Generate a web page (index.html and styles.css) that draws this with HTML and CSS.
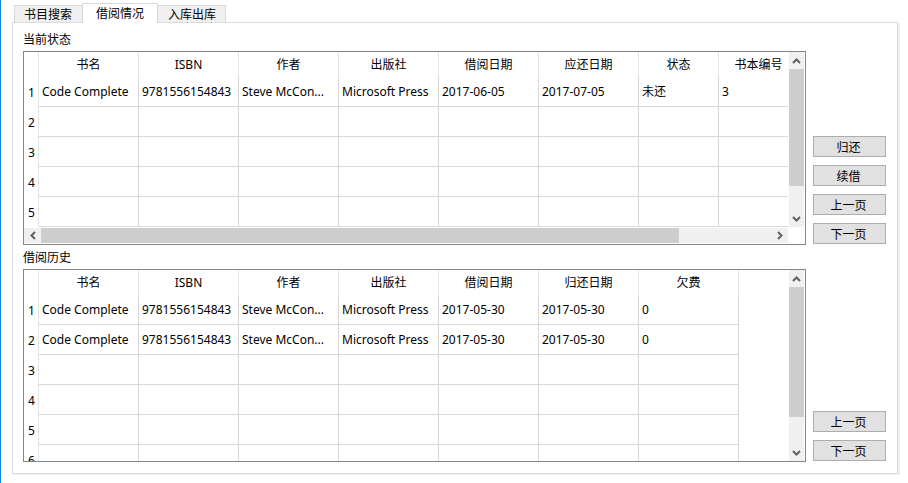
FILE: index.html
```
<!DOCTYPE html>
<html lang="zh-CN">
<head>
<meta charset="utf-8">
<title>借阅情况</title>
<link rel="stylesheet" href="styles.css">
</head>
<body>
<div class="tabs" role="tablist">
  <button class="tab" role="tab" aria-selected="false">书目搜索</button>
  <button class="tab tab-active" role="tab" aria-selected="true">借阅情况</button>
  <button class="tab" role="tab" aria-selected="false">入库出库</button>
</div>
<main class="panel">
  <h2 class="label" id="current">当前状态</h2>
  <section class="group">
    <div class="frame">
      <div class="viewport">
        <table class="grid" aria-labelledby="current">
          <colgroup><col class="col-index"><col class="col"><col class="col"><col class="col"><col class="col"><col class="col"><col class="col"><col class="col-narrow"><col class="col-narrow"></colgroup>
          <thead><tr><th></th><th>书名</th><th>ISBN</th><th>作者</th><th>出版社</th><th>借阅日期</th><th>应还日期</th><th>状态</th><th>书本编号</th></tr></thead>
          <tbody>
            <tr><th>1</th><td>Code Complete</td><td>9781556154843</td><td>Steve McCon...</td><td>Microsoft Press</td><td>2017-06-05</td><td>2017-07-05</td><td>未还</td><td>3</td></tr>
            <tr><th>2</th><td></td><td></td><td></td><td></td><td></td><td></td><td></td><td></td></tr>
            <tr><th>3</th><td></td><td></td><td></td><td></td><td></td><td></td><td></td><td></td></tr>
            <tr><th>4</th><td></td><td></td><td></td><td></td><td></td><td></td><td></td><td></td></tr>
            <tr><th>5</th><td></td><td></td><td></td><td></td><td></td><td></td><td></td><td></td></tr>
          </tbody>
        </table>
      </div>
      <div class="scroll scroll-v">
        <button class="arrow" aria-label="向上滚动"><svg width="9" height="6" viewBox="0 0 9 6"><path d="M1 5 4.500 1.500 8 5"/></svg></button>
        <div class="track"><div class="thumb thumb-current"></div></div>
        <button class="arrow" aria-label="向下滚动"><svg width="9" height="6" viewBox="0 0 9 6"><path d="M1 1 4.500 4.500 8 1"/></svg></button>
      </div>
      <div class="scroll scroll-h">
        <button class="arrow" aria-label="向左滚动"><svg width="6" height="9" viewBox="0 0 6 9"><path d="M5 1 1.500 4.500 5 8"/></svg></button>
        <div class="track"><div class="thumb thumb-across"></div></div>
        <button class="arrow" aria-label="向右滚动"><svg width="6" height="9" viewBox="0 0 6 9"><path d="M1 1 4.500 4.500 1 8"/></svg></button>
      </div>
    </div>
    <div class="actions">
      <button class="action">归还</button>
      <button class="action">续借</button>
      <button class="action">上一页</button>
      <button class="action">下一页</button>
    </div>
  </section>
  <h2 class="label" id="history">借阅历史</h2>
  <section class="group group-fill">
    <div class="frame frame-fill">
      <div class="viewport">
        <table class="grid" aria-labelledby="history">
          <colgroup><col class="col-index"><col class="col"><col class="col"><col class="col"><col class="col"><col class="col"><col class="col"><col class="col"></colgroup>
          <thead><tr><th></th><th>书名</th><th>ISBN</th><th>作者</th><th>出版社</th><th>借阅日期</th><th>归还日期</th><th>欠费</th></tr></thead>
          <tbody>
            <tr><th>1</th><td>Code Complete</td><td>9781556154843</td><td>Steve McCon...</td><td>Microsoft Press</td><td>2017-05-30</td><td>2017-05-30</td><td>0</td></tr>
            <tr><th>2</th><td>Code Complete</td><td>9781556154843</td><td>Steve McCon...</td><td>Microsoft Press</td><td>2017-05-30</td><td>2017-05-30</td><td>0</td></tr>
            <tr><th>3</th><td></td><td></td><td></td><td></td><td></td><td></td><td></td></tr>
            <tr><th>4</th><td></td><td></td><td></td><td></td><td></td><td></td><td></td></tr>
            <tr><th>5</th><td></td><td></td><td></td><td></td><td></td><td></td><td></td></tr>
            <tr><th>6</th><td></td><td></td><td></td><td></td><td></td><td></td><td></td></tr>
          </tbody>
        </table>
      </div>
      <div class="scroll scroll-v">
        <button class="arrow" aria-label="向上滚动"><svg width="9" height="6" viewBox="0 0 9 6"><path d="M1 5 4.500 1.500 8 5"/></svg></button>
        <div class="track"><div class="thumb thumb-history"></div></div>
        <button class="arrow" aria-label="向下滚动"><svg width="9" height="6" viewBox="0 0 9 6"><path d="M1 1 4.500 4.500 8 1"/></svg></button>
      </div>
    </div>
    <div class="actions">
      <button class="action">上一页</button>
      <button class="action">下一页</button>
    </div>
  </section>
</main>
</body>
</html>
```
FILE: styles.css
```
* {
  box-sizing: border-box;
}

body {
  display: flex;
  flex-direction: column;
  height: 100vh;
  margin: 0;
  padding: 3px 10px 9px 11px;
  border-left: 1px solid #1883d7;
  background: #fff;
  color: #000;
  font: 12px/16px "Noto Sans", "Noto Sans CJK SC", sans-serif;
}

button {
  margin: 0;
  padding: 0;
  border: 0;
  color: inherit;
  font: inherit;
}

.tabs {
  display: flex;
  align-items: flex-end;
  padding-left: 2px;
}

.tab {
  height: 17px;
  padding: 1px 9px 0;
  border: 1px solid #d9d9d9;
  border-bottom: 0;
  background: #f0f0f0;
}

.tab:first-child {
  border-right: 0;
  padding-right: 10px;
}

.tab:last-child {
  border-left: 0;
  padding-left: 10px;
}

.tab-active {
  z-index: 1;
  height: 20px;
  margin-bottom: -1px;
  padding: 0 13px;
  background: #fff;
}

.panel {
  display: flex;
  flex: 1;
  flex-direction: column;
  min-height: 0;
  padding: 8px 11px 11px 10px;
  border: 1px solid #dcdcdc;
  box-shadow: 1px 1px 0 #f0f0f0, 2px 1px 0 #f0f0f0;
}

.label {
  margin: 0 0 3px;
  padding-top: 1px;
  font-size: 12px;
  font-weight: 400;
  line-height: 16px;
}

.group {
  display: grid;
  grid-template-columns: minmax(0, 1fr) 73px;
  column-gap: 7px;
  margin-bottom: 4px;
}

.group-fill {
  flex: 1;
  grid-template-rows: minmax(0, 1fr);
  min-height: 0;
  margin-bottom: 0;
}

.frame {
  display: grid;
  grid-template-columns: minmax(0, 1fr) 15px;
  grid-template-rows: auto 15px;
  gap: 1px;
  padding: 0 1px 1px 0;
  border: 1px solid #828790;
}

.frame-fill {
  grid-template-rows: minmax(0, 1fr);
  padding-bottom: 0;
}

.viewport {
  overflow: hidden;
}

.grid {
  width: 0;
  table-layout: fixed;
  border-collapse: separate;
  border-spacing: 0;
}

.col-index {
  width: 15px;
}

.col {
  width: 100px;
}

.col-narrow {
  width: 80px;
}

.grid th,
.grid td {
  height: 30px;
  padding: 0;
  border-right: 1px solid #d8d8d8;
  font-weight: 400;
  white-space: nowrap;
}

.grid thead th {
  height: 25px;
}

.grid thead th,
.grid tbody th {
  border-right-color: #e5e5e5;
}

.grid tbody th {
  padding: 2px 0 0 1px;
}

.grid td {
  padding-left: 3px;
  border-bottom: 1px solid #d8d8d8;
}

.scroll {
  display: flex;
  background: #f0f0f0;
}

.scroll-v {
  flex-direction: column;
}

.arrow {
  display: flex;
  flex: 0 0 17px;
  align-items: center;
  justify-content: center;
  background: #f0f0f0;
}

.arrow path {
  fill: none;
  stroke: #606060;
  stroke-width: 2;
}

.track {
  flex: 1;
  min-height: 0;
}

.thumb {
  height: 100%;
  background: #cdcdcd;
}

.thumb-current,
.thumb-history {
  height: 83%;
}

.thumb-across {
  width: 87.4%;
}

.actions {
  display: flex;
  flex-direction: column;
  justify-content: flex-end;
  gap: 8px;
  padding-bottom: 1px;
}

.action {
  height: 21px;
  padding: 2px 2px 0 0;
  border: 1px solid #adadad;
  background: #e1e1e1;
}
```
